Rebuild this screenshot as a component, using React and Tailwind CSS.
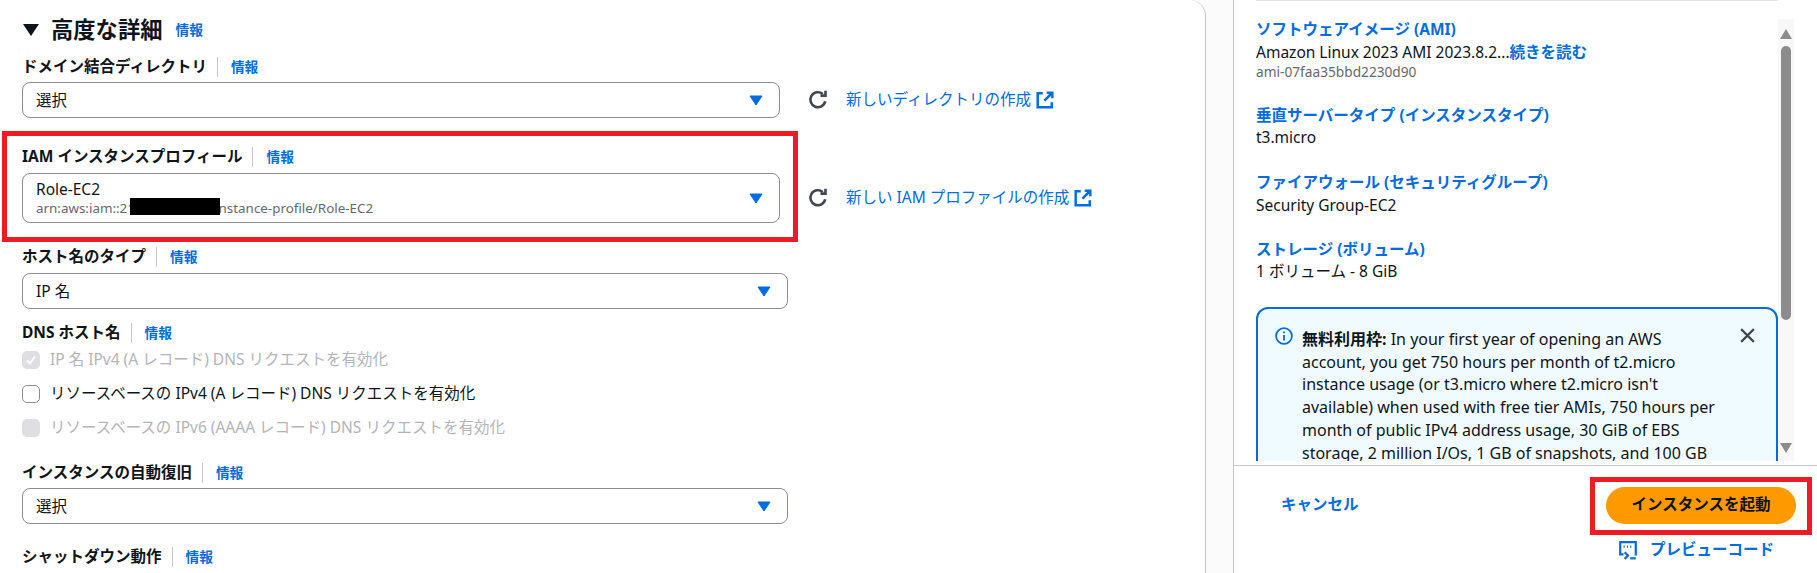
import React from "react";

function Ext() {
  return (
    <svg width="18" height="18" viewBox="0 0 16 16" fill="none" stroke="#006ce0" strokeWidth="2.2" className="shrink-0">
      <path d="M9.5 1.5h5v5" /><path d="M14 2 7.5 8.5" /><path d="M6 2H1.5v12.5h12.5V10" />
    </svg>
  );
}

function Refresh() {
  return (
    <svg width="20" height="20" viewBox="0 0 16 16" fill="none" stroke="#424650" strokeWidth="2.1" className="shrink-0">
      <path d="M13.8 9A6 6 0 1 1 11.8 3.2" /><path d="M14 0.5V4.5H10" />
    </svg>
  );
}

function Caret({ className = "" }) {
  return (
    <svg width="14" height="11" viewBox="0 0 14 11" className={"shrink-0 " + className}><path d="M1 1h12L7 10z" fill="#006ce0" stroke="#006ce0" strokeLinejoin="round" /></svg>
  );
}

function Label({ children, className = "" }) {
  return (
    <div className={"flex items-center h-5 text-[15.5px] font-bold text-[#0f141a] " + className}>
      <span>{children}</span>
      <span className="ml-[10px] mr-[13px] w-px h-[20px] bg-[#c6c6cd]" />
      <span className="text-[13.7px] font-bold text-[#006ce0]">情報</span>
    </div>
  );
}

function Select({ children, w, h }) {
  return (
    <div className={"flex items-center justify-between border border-[#8c8c94] rounded-lg pl-[13px] pr-[16px] bg-white " + w + " " + h}>
      <div className="text-[15.5px] leading-5 text-[#0f141a]">{children}</div>
      <Caret />
    </div>
  );
}

function Check({ state, children, className = "" }) {
  const disabled = state !== "off";
  return (
    <div className={"flex items-center h-5 " + className}>
      <span className={"w-[18px] h-[18px] rounded-[5px] flex items-center justify-center shrink-0 " + (disabled ? "bg-[#dedee3]" : "border border-[#8c8c94] bg-white")}>
        {state === "checked" && (
          <svg width="12" height="12" viewBox="0 0 12 12" fill="none" stroke="#fff" strokeWidth="2"><path d="M2 6.5l3 3 5-7" /></svg>
        )}
      </span>
      <span className={"ml-[10px] text-[15.5px] " + (disabled ? "text-[#b4b4bb]" : "text-[#0f141a]")}>{children}</span>
    </div>
  );
}

function Summary({ title, children, className = "" }) {
  return (
    <div className={className}>
      <div className="text-[15.5px] leading-5 font-bold text-[#006ce0]">{title}</div>
      {children}
    </div>
  );
}

function Link({ children }) {
  return (
    <div className="flex items-center ml-[18px] gap-[5px] text-[15.5px] text-[#006ce0]">
      <span>{children}</span><Ext />
    </div>
  );
}

export default function App() {
  return (
    <div className="w-[1817px] h-[573px] overflow-hidden flex bg-[#fbfbfc] text-[#0f141a] font-['Noto_Sans','Noto_Sans_CJK_JP',sans-serif] relative">
      <div className="w-[1206px] h-[600px] bg-white border-r border-[#c6c6cd] rounded-tr-2xl pl-[22px] pt-5 shrink-0">
        <div className="flex items-center h-5">
          <svg width="16" height="12" viewBox="0 0 16 12" className="ml-px"><path d="M0 0h16L8 12z" fill="#0f141a" /></svg>
          <span className="ml-[12px] text-[22.3px] font-bold">高度な詳細</span>
          <span className="ml-[13px] text-[13.7px] font-bold text-[#006ce0]">情報</span>
        </div>

        <Label className="mt-[17px]">ドメイン結合ディレクトリ</Label>
        <div className="flex items-center mt-[5px]">
          <Select w="w-[758px]" h="h-[36px]"><span>選択</span></Select>
          <div className="ml-[28px]"><Refresh /></div>
          <Link>新しいディレクトリの作成</Link>
        </div>

        <Label className="mt-[29px]">IAM インスタンスプロフィール</Label>
        <div className="flex items-center mt-[6px]">
          <Select w="w-[758px]" h="h-[50px]">
            <div className="leading-[19px] mb-px">Role-EC2</div>
            <div className="text-[13.4px] leading-4 text-[#656871]">arn:aws:iam::210000000000:instance-profile/Role-EC2</div>
          </Select>
          <div className="ml-[28px]"><Refresh /></div>
          <Link>新しい IAM プロファイルの作成</Link>
        </div>

        <Label className="mt-[24px]">ホスト名のタイプ</Label>
        <div className="mt-[6px]">
          <Select w="w-[766px]" h="h-[36px]"><span>IP 名</span></Select>
        </div>

        <Label className="mt-[14px]">DNS ホスト名</Label>
        <Check state="checked" className="mt-[7px]">IP 名 IPv4 (A レコード) DNS リクエストを有効化</Check>
        <Check state="off" className="mt-[14px]">リソースベースの IPv4 (A レコード) DNS リクエストを有効化</Check>
        <Check state="disabled" className="mt-[14px]">リソースベースの IPv6 (AAAA レコード) DNS リクエストを有効化</Check>

        <Label className="mt-[25px]">インスタンスの自動復旧</Label>
        <div className="mt-[5px]">
          <Select w="w-[766px]" h="h-[36px]"><span>選択</span></Select>
        </div>

        <Label className="mt-[23px]">シャットダウン動作</Label>
      </div>

      <div className="ml-[27px] flex-1 bg-white border-l border-[#c6c6cd] flex flex-col min-w-0">
        <div className="h-[461px] flex pl-[22px] pr-[23px] overflow-hidden">
          <div className="flex-1 min-w-0 flex flex-col">
            <div className="h-px bg-[#e4e4e8]" />
            <div className="flex-1 overflow-hidden pt-[18px] text-[15.5px] leading-5">
              <Summary title="ソフトウェアイメージ (AMI)">
                <div className="mt-[3px]">Amazon Linux 2023 AMI 2023.8.2...<span className="font-bold text-[#006ce0]">続きを読む</span></div>
                <div className="text-[13.7px] leading-4 text-[#656871] mt-[2px]">ami-07faa35bbd2230d90</div>
              </Summary>
              <Summary title="垂直サーバータイプ (インスタンスタイプ)" className="mt-[25px]"><div className="mt-[2px]">t3.micro</div></Summary>
              <Summary title="ファイアウォール (セキュリティグループ)" className="mt-[25px]"><div className="mt-[3px]">Security Group-EC2</div></Summary>
              <Summary title="ストレージ (ボリューム)" className="mt-[24px]"><div className="mt-[2px]">1 ボリューム - 8 GiB</div></Summary>
              <div className="mt-[26px] border-2 border-[#006ce0] rounded-xl bg-[#f0fbff] flex pl-[17px] pt-[15px] pr-[20px] pb-4">
                <svg width="18" height="18" viewBox="0 0 16 16" fill="none" stroke="#006ce0" strokeWidth="1.6" className="shrink-0 mt-[3px]">
                  <circle cx="8" cy="8" r="7" /><path d="M8 7v5" /><path d="M8 4v1.6" />
                </svg>
                <div className="ml-[9px] mt-[4px] text-[16px] leading-[22.7px] w-[414px]">
                  <b>無料利用枠:</b> In your first year of opening an AWS account, you get 750 hours per month of t2.micro instance usage (or t3.micro where t2.micro isn't available) when used with free tier AMIs, 750 hours per month of public IPv4 address usage, 30 GiB of EBS storage, 2 million I/Os, 1 GB of snapshots, and 100 GB
                </div>
                <svg width="17" height="17" viewBox="0 0 16 16" fill="none" stroke="#424650" strokeWidth="2" className="shrink-0 ml-auto mt-[3px]"><path d="M2 2l12 12M14 2 2 14" /></svg>
              </div>
            </div>
          </div>
          <div className="w-[16px] mt-[19px] bg-[#f8f8f8] flex flex-col items-center shrink-0">
            <svg width="12" height="10" viewBox="0 0 12 10" className="mt-[10px]"><path d="M0 10h12L6 0z" fill="#8c8c8c" /></svg>
            <div className="w-[10px] h-[274px] mt-[7px] rounded-full bg-[#8c8c8c]" />
            <svg width="12" height="10" viewBox="0 0 12 10" className="mt-auto mb-[8px]"><path d="M0 0h12L6 10z" fill="#8c8c8c" /></svg>
          </div>
        </div>
        <div className="h-px bg-[#c6c6cd] mt-[4px]" />
        <div className="flex pl-[47px] pr-[21px] pt-[21px] justify-between">
          <div className="mt-[7px] text-[15.5px] font-bold text-[#006ce0] leading-5">キャンセル</div>
          <div className="flex flex-col items-center">
            <div className="w-[190px] h-[37px] rounded-full bg-[#ff9900] flex items-center justify-center text-[15.5px] font-bold text-[#0f141a]">
              <span className="-mt-[2px]">インスタンスを起動</span>
            </div>
            <div className="mt-[14px] mr-[10px] flex items-center gap-[12px] text-[15.5px] font-bold text-[#006ce0]">
              <svg width="20" height="20" viewBox="0 0 18 18" fill="none" stroke="#006ce0" strokeWidth="2">
                <path d="M5 13H2V2h14v11h-1" /><path d="M5 6h1M8 6h1M11 6h1" /><path d="M6 11l3 3-3 3" /><path d="M11 16.5h5" />
              </svg>
              <span>プレビューコード</span>
            </div>
          </div>
        </div>
      </div>

      {/* Annotations over the page */}
      <div className="absolute left-[2px] top-[131px] w-[796px] h-[111px] border-[5px] border-[#ed1c24]" />
      <div className="absolute left-[1590px] top-[477px] w-[222px] h-[58px] border-[5px] border-[#ed1c24]" />
      <div className="absolute left-[130px] top-[198px] w-[90px] h-[17px] bg-black" />
    </div>
  );
}
